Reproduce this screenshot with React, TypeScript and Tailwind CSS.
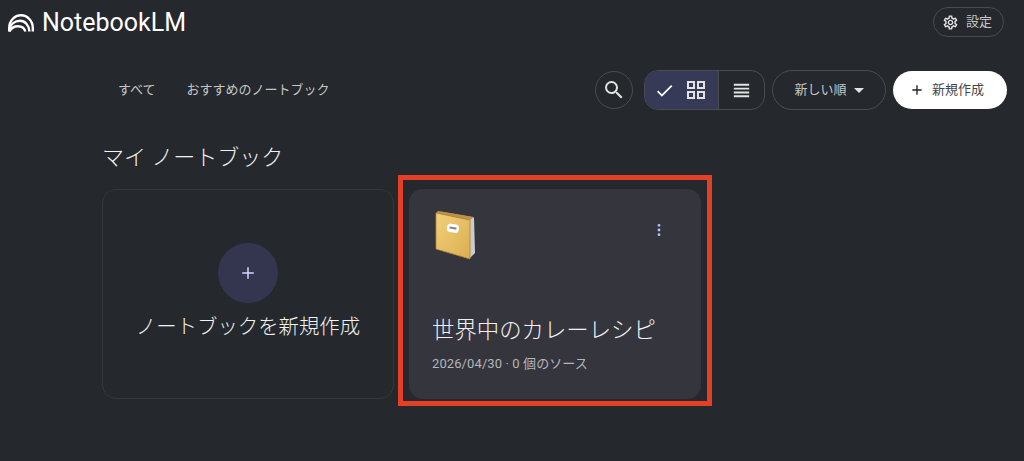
import { MoreVertical, Plus } from 'lucide-react'

const fontStack = "font-['Roboto','Noto_Sans_CJK_JP',sans-serif]"

// Material icons, drawn inline because lucide's versions have rounder strokes
function MaterialIcon({ d, size = 24, className }: { d: string; size?: number; className?: string }) {
    return (
        <svg width={size} height={size} viewBox="0 0 24 24" fill="currentColor" className={className}>
            <path d={d} />
        </svg>
    )
}

const searchPath =
    'M15.5 14h-.79l-.28-.27A6.47 6.47 0 0 0 16 9.5 6.5 6.5 0 1 0 9.5 16c1.61 0 3.09-.59 4.23-1.57l.27.28v.79l5 4.99L20.49 19l-4.99-5zm-6 0C7.01 14 5 11.99 5 9.5S7.01 5 9.5 5 14 7.01 14 9.5 11.99 14 9.5 14z'
const checkPath = 'M9 16.17L4.83 12l-1.42 1.41L9 19 21 7l-1.41-1.41z'
const gridPath =
    'M3 3v8h8V3H3zm6 6H5V5h4v4zm-6 4v8h8v-8H3zm6 6H5v-4h4v4zm4-16v8h8V3h-8zm6 6h-4V5h4v4zm-6 4v8h8v-8h-8zm6 6h-4v-4h4v4z'
const headlinePath = 'M4 15h16v-2H4v2zm0 4h16v-2H4v2zm0-8h16V9H4v2zm0-6v2h16V5H4z'
const addPath = 'M19 13h-6v6h-2v-6H5v-2h6V5h2v6h6v2z'
const settingsPath =
    'M19.43 12.98c.04-.32.07-.64.07-.98 0-.34-.03-.66-.07-.98l2.11-1.65c.19-.15.24-.42.12-.64l-2-3.46c-.09-.16-.26-.25-.44-.25-.06 0-.12.01-.17.03l-2.49 1c-.52-.4-1.08-.73-1.69-.98l-.38-2.65C14.46 2.18 14.25 2 14 2h-4c-.25 0-.46.18-.49.42l-.38 2.65c-.61.25-1.17.59-1.69.98l-2.49-1c-.06-.02-.12-.03-.18-.03-.17 0-.34.09-.43.25l-2 3.46c-.13.22-.07.49.12.64l2.11 1.65c-.04.32-.07.65-.07.98 0 .33.03.66.07.98l-2.11 1.65c-.19.15-.24.42-.12.64l2 3.46c.09.16.26.25.44.25.06 0 .12-.01.17-.03l2.49-1c.52.4 1.08.73 1.69.98l.38 2.65c.03.24.24.42.49.42h4c.25 0 .46-.18.49-.42l.38-2.65c.61-.25 1.17-.59 1.69-.98l2.49 1c.06.02.12.03.18.03.17 0 .34-.09.43-.25l2-3.46c.12-.22.07-.49-.12-.64l-2.11-1.65zm-1.98-1.71c.04.31.05.52.05.73 0 .21-.02.43-.05.73l-.14 1.13.89.7 1.08.84-.7 1.21-1.27-.51-1.04-.42-.9.68c-.43.32-.84.56-1.25.73l-1.06.43-.16 1.13-.2 1.35h-1.4l-.19-1.35-.16-1.13-1.06-.43c-.43-.18-.83-.41-1.23-.71l-.91-.7-1.06.43-1.27.51-.7-1.21 1.08-.84.89-.7-.14-1.13c-.03-.31-.05-.54-.05-.74s.02-.43.05-.73l.14-1.13-.89-.7-1.08-.84.7-1.21 1.27.51 1.04.42.9-.68c.43-.32.84-.56 1.25-.73l1.06-.43.16-1.13.2-1.35h1.39l.19 1.35.16 1.13 1.06.43c.43.18.83.41 1.23.71l.91.7 1.06-.43 1.27-.51.7 1.21-1.07.85-.89.7.14 1.13zM12 8c-2.21 0-4 1.79-4 4s1.79 4 4 4 4-1.79 4-4-1.79-4-4-4zm0 6c-1.1 0-2-.9-2-2s.9-2 2-2 2 .9 2 2-.9 2-2 2z'

function Logo() {
    return (
        <svg width="26" height="18" viewBox="0 0 26 18" fill="none" stroke="white" strokeWidth="2.4">
            <path d="M1.2 17.5V14C1.2 7 6.5 1.3 13 1.3S24.8 7 24.8 14V17.5" />
            <path d="M1.2 15.5C2.5 10 7 6.8 12 6.8C17 6.8 21 11 21.4 17.5" />
            <path d="M1.5 17.5C3 14.3 6.5 12.3 10 12.3C13.5 12.3 16.5 14.5 17.4 17.5" />
        </svg>
    )
}

function BookEmoji() {
    return (
        <svg width="42" height="50" viewBox="0 0 42 50">
            <defs>
                <linearGradient id="cover" x1="0" y1="0" x2="1" y2="1">
                    <stop offset="0" stopColor="#f0d07c" />
                    <stop offset="1" stopColor="#dcae50" />
                </linearGradient>
                <linearGradient id="pages" x1="0" y1="0" x2="1" y2="0">
                    <stop offset="0" stopColor="#8f8f8f" />
                    <stop offset="1" stopColor="#d0d0d0" />
                </linearGradient>
            </defs>
            <polygon points="3,1 39,7.5 40,43 35,48 35,10" fill="url(#pages)" />
            <polygon points="3,1 39,7 35,10 1,3" fill="#bd9147" />
            <polygon points="1,3 35,10 35,49 1,39" fill="url(#cover)" stroke="#b5842f" strokeWidth="0.8" strokeLinejoin="round" />
            <rect x="12" y="14" width="12" height="8.5" rx="3.5" fill="white" transform="rotate(10 18 18)" />
            <rect x="14.5" y="17" width="7" height="2.2" fill="#8a8a8a" transform="rotate(10 18 18)" />
        </svg>
    )
}

export default function App() {
    return (
        <div className={`h-[461px] w-[1024px] overflow-hidden bg-[#25282d] ${fontStack}`}>
            {/* Header */}
            <header className="flex h-[44px] items-start justify-between pl-2 pr-5 pt-[7px]">
                <div className="flex items-center gap-[8px] pt-[4px]">
                    <Logo />
                    <span className="text-[25px] leading-[24px] text-white">NotebookLM</span>
                </div>
                <button className="flex h-[30px] w-[71px] items-center gap-[7px] rounded-full border border-[#4a4c50] pl-[8px] text-[13px] text-[#c4c7c5]">
                    <MaterialIcon d={settingsPath} size={17} className="text-[#e3e3e3]" />
                    設定
                </button>
            </header>

            {/* Toolbar */}
            <div className="mt-[26px] flex h-[40px] items-center justify-between pl-[118px] pr-[17px]">
                <nav className="flex gap-[31px] text-[13px] text-[#c4c7c5]">
                    <span>すべて</span>
                    <span>おすすめのノートブック</span>
                </nav>
                <div className="flex items-center">
                    <button className="flex h-[38px] w-[38px] items-center justify-center rounded-full border border-[#4a4c50] text-[#e3e3e3]">
                        <MaterialIcon d={searchPath} size={24} />
                    </button>
                    <div className="ml-[11px] flex h-[40px] w-[121px] overflow-hidden rounded-[14px] border border-[#4a4c50]">
                        <div className="flex w-[73px] items-center gap-[9px] bg-[#363a56] pl-[9px] text-white">
                            <MaterialIcon d={checkPath} size={21} />
                            <MaterialIcon d={gridPath} size={24} className="text-[#e3e3e3]" />
                        </div>
                        <div className="flex flex-1 items-center justify-center border-l border-[#4a4c50] text-[#e3e3e3]">
                            <MaterialIcon d={headlinePath} size={23} />
                        </div>
                    </div>
                    <button className="ml-[7px] flex h-[40px] w-[114px] items-center justify-center gap-[7px] rounded-full border border-[#4a4c50] text-[13px] text-[#c4c7c5]">
                        新しい順
                        <span className="mt-[1px] h-0 w-0 border-x-[5px] border-t-[5px] border-x-transparent border-t-[#e3e3e3]" />
                    </button>
                    <button className="ml-[7px] flex h-[38px] w-[114px] items-center gap-[7px] rounded-full bg-white pl-[16px] text-[13px] text-[#44474a]">
                        <MaterialIcon d={addPath} size={16} className="text-[#1f1f1f]" />
                        新規作成
                    </button>
                </div>
            </div>

            {/* Notebooks */}
            <main className="pl-[102px] pt-[32px]">
                <h1 className="text-[22px] font-light leading-[32px] text-[#f2f2f2]">マイ ノートブック</h1>
                <div className="mt-[15px] flex gap-[15px]">
                    <div className="flex h-[210px] w-[292px] flex-col items-center rounded-[14px] border border-[#35373c] pt-[53px]">
                        <div className="flex h-[60px] w-[60px] items-center justify-center rounded-full bg-[#343650] text-[#d3d3ff]">
                            <Plus size={18} strokeWidth={2} />
                        </div>
                        <span className="mt-[10px] text-[20.4px] font-light leading-[28px] text-[#f2f2f2]">ノートブックを新規作成</span>
                    </div>

                    <div className="relative flex h-[210px] w-[292px] flex-col rounded-[14px] bg-[#35353e] pl-[23px] pr-[34px] pt-[21px]">
                        <div className="flex items-start justify-between pl-[3px]">
                            <BookEmoji />
                            <MoreVertical size={16} strokeWidth={2.25} className="mt-[12px] text-[#a8c7fa]" />
                        </div>
                        <h2 className="mt-[54px] whitespace-nowrap text-[22.4px] font-light leading-[32px] text-[#f2f2f2]">世界中のカレーレシピ</h2>
                        <p className="mt-[9px] whitespace-nowrap text-[13px] tracking-[0.1px] leading-[18px] text-[#b4b6ba]">2026/04/30 · 0 個のソース</p>
                        {/* Red highlight annotation */}
                        <div className="absolute bottom-[-7px] left-[-11px] right-[-11px] top-[-14px] border-[5px] border-[#e53f25]" />
                    </div>
                </div>
            </main>
        </div>
    )
}
